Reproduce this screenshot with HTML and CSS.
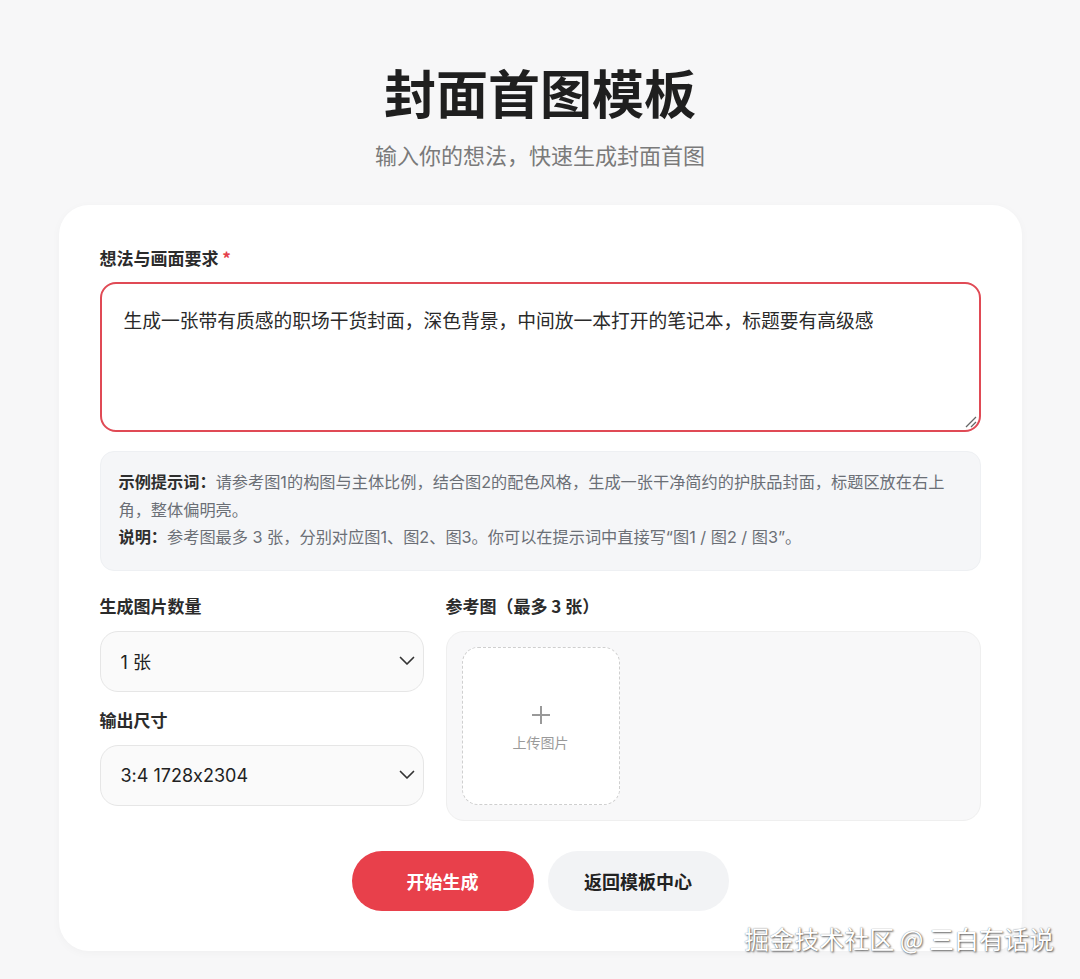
FILE: index.html
```html
<!DOCTYPE html>
<html lang="zh-CN">
<head>
<meta charset="utf-8">
<title>封面首图模板</title>
<link rel="stylesheet" href="styles.css">
</head>
<body>
<header class="hero">
  <h1 class="title">封面首图模板</h1>
  <p class="subtitle">输入你的想法，快速生成封面首图</p>
</header>
<main class="card">
  <label class="label">想法与画面要求 <span class="req">*</span></label>
  <div class="textarea">生成一张带有质感的职场干货封面，深色背景，中间放一本打开的笔记本，标题要有高级感<svg class="grip" width="14" height="14" viewBox="0 0 14 14"><path d="M13 3 L3 13 M13 8 L8 13" stroke="#666" stroke-width="1.3"/></svg></div>
  <div class="hint">
    <p><b>示例提示词：</b><span>请参考图1的构图与主体比例，结合图2的配色风格，生成一张干净简约的护肤品封面，标题区放在右上角，整体偏明亮。</span></p>
    <p><b>说明：</b><span>参考图最多 3 张，分别对应图1、图2、图3。你可以在提示词中直接写“图1 / 图2 / 图3”。</span></p>
  </div>
  <div class="grid">
    <div class="col">
      <label class="label">生成图片数量</label>
      <div class="select"><span>1 张</span><svg width="16" height="10" viewBox="0 0 16 10"><path d="M1.5 1.5 L8 8 L14.5 1.5" fill="none" stroke="#333" stroke-width="1.7" stroke-linecap="round" stroke-linejoin="round"/></svg></div>
      <label class="label label-2">输出尺寸</label>
      <div class="select"><span>3:4 1728x2304</span><svg width="16" height="10" viewBox="0 0 16 10"><path d="M1.5 1.5 L8 8 L14.5 1.5" fill="none" stroke="#333" stroke-width="1.7" stroke-linecap="round" stroke-linejoin="round"/></svg></div>
    </div>
    <div class="col">
      <label class="label">参考图（最多 3 张）</label>
      <div class="refbox">
        <div class="upload">
          <svg width="20" height="20" viewBox="0 0 20 20"><path d="M10 1 V19 M1 10 H19" stroke="#999" stroke-width="2"/></svg>
          <span>上传图片</span>
        </div>
      </div>
    </div>
  </div>
  <div class="actions">
    <button class="btn btn-primary">开始生成</button>
    <button class="btn btn-secondary">返回模板中心</button>
  </div>
</main>
<div class="watermark">掘金技术社区 @ 三白有话说</div>
</body>
</html>
```
FILE: styles.css
```css
* { box-sizing: border-box; }
html, body { margin: 0; padding: 0; }
body {
  background: #f7f7f8;
  font-family: "Noto Sans CJK SC", "Noto Sans", sans-serif;
  color: #222;
  min-height: 979px;
  position: relative;
}
.hero {
  padding-top: 61px;
  text-align: center;
}
.title {
  margin: 0;
  font-size: 52px;
  line-height: 62px;
  font-weight: 700;
  color: #1f1f1f;
}
.subtitle {
  margin: 16px 0 0;
  font-size: 22px;
  line-height: 31px;
  color: #7a7a7a;
}
.card {
  width: 963px;
  margin: 35px auto 0;
  background: #fff;
  border-radius: 30px;
  padding: 41px 41px 40px;
  box-shadow: 0 2px 10px rgba(0,0,0,0.03);
}
.label {
  display: block;
  font-size: 17px;
  line-height: 24px;
  font-weight: 700;
  color: #2b2b2b;
}
.req { color: #e5404b; }
.textarea {
  position: relative;
  margin-top: 12px;
  height: 150px;
  border: 2px solid #e04a55;
  border-radius: 16px;
  padding: 22px 22px;
  font-size: 18.75px;
  line-height: 28px;
  color: #2a2a2a;
}
.grip { position: absolute; right: 2px; bottom: 2px; }
.hint {
  margin-top: 19px;
  background: #f5f6f8;
  border: 1px solid #eef0f3;
  border-radius: 14px;
  padding: 17px 18px 18px;
  font-family: "Inter", "Noto Sans CJK SC", sans-serif;
  font-feature-settings: "calt" 0;
  font-size: 16.2px;
  line-height: 27.5px;
  color: #6b6f76;
}
.hint p { margin: 0; }
.hint b { color: #2e2e2e; font-weight: 700; }
.grid {
  margin-top: 23px;
  display: grid;
  grid-template-columns: 324px 1fr;
  column-gap: 22px;
}
.col { display: flex; flex-direction: column; }
.select {
  margin-top: 13px;
  height: 61px;
  border: 1px solid #e6e6e6;
  border-radius: 18px;
  background: #fafafa;
  display: flex;
  align-items: center;
  justify-content: space-between;
  padding: 0 8px 0 20px;
  font-family: "Inter", "Noto Sans CJK SC", sans-serif;
  font-feature-settings: "calt" 0;
  font-size: 18px;
  color: #222;
}
.label-2 { margin-top: 16px; }
.refbox {
  margin-top: 13px;
  height: 190px;
  background: #f8f8f9;
  border: 1px solid #efefef;
  border-radius: 18px;
  padding: 15px;
}
.upload {
  width: 158px;
  height: 158px;
  border: 1.5px dashed #cfcfcf;
  border-radius: 16px;
  background: #fff;
  display: flex;
  flex-direction: column;
  align-items: center;
  justify-content: center;
  gap: 8px;
  padding-top: 4px;
}
.upload span {
  font-size: 14px;
  color: #9a9a9a;
  line-height: 18px;
}
.actions {
  margin-top: 30px;
  display: flex;
  justify-content: center;
  gap: 14px;
}
.btn {
  width: 182px;
  height: 60px;
  border: none;
  border-radius: 30px;
  font-family: inherit;
  font-size: 18px;
  font-weight: 700;
}
.btn-primary { background: #e8404b; color: #fff; }
.btn-secondary { background: #f2f3f5; color: #222; width: 181px; }
.watermark {
  position: absolute;
  right: 26px;
  top: 921px;
  font-size: 25px;
  line-height: 34px;
  color: #fff;
  text-shadow: 1px 1px 2px rgba(0,0,0,0.6), 0 0 1px rgba(0,0,0,0.5);
}
```
